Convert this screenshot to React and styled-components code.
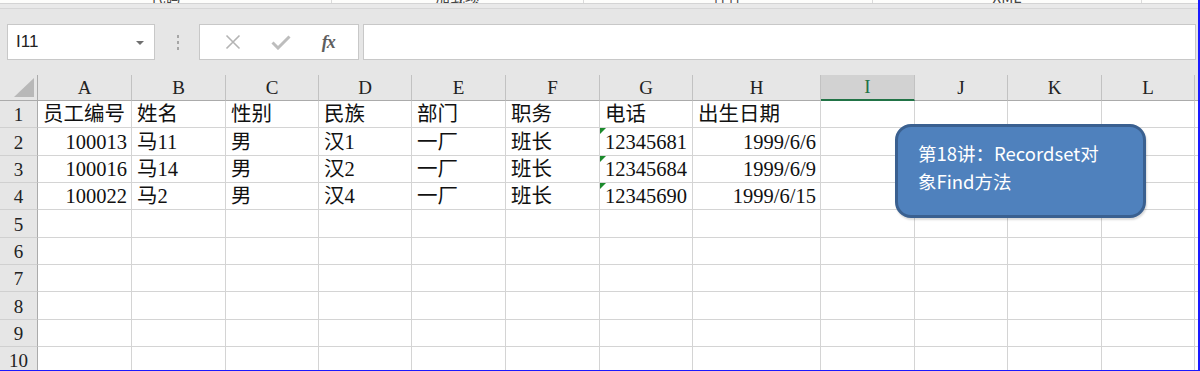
import React from 'react';
import styled, { createGlobalStyle } from 'styled-components';

const GlobalStyle = createGlobalStyle`
  html, body {
    margin: 0;
    padding: 0;
    background: #ffffff;
  }
  * {
    box-sizing: border-box;
  }
`;

const colWidths = [94, 94, 93, 93, 94, 94, 93, 128, 94, 93, 94, 93];
const colNames = ['A', 'B', 'C', 'D', 'E', 'F', 'G', 'H', 'I', 'J', 'K', 'L'];
const rowHeights = [27, 28, 27, 27, 28, 27, 27, 28, 27, 27];
const selectedCol = 8;

const rows = [
  ['员工编号', '姓名', '性别', '民族', '部门', '职务', '电话', '出生日期'],
  [{ v: '100013', right: true }, '马11', '男', '汉1', '一厂', '班长', { v: '12345681', flag: true }, { v: '1999/6/6', right: true }],
  [{ v: '100016', right: true }, '马14', '男', '汉2', '一厂', '班长', { v: '12345684', flag: true }, { v: '1999/6/9', right: true }],
  [{ v: '100022', right: true }, '马2', '男', '汉4', '一厂', '班长', { v: '12345690', flag: true }, { v: '1999/6/15', right: true }],
];

const ribbonGroups = [
  { label: '代码', width: 332 },
  { label: '加载项', width: 252 },
  { label: '控件', width: 289 },
  { label: 'XML', width: 269 },
  { label: '', width: 58 },
];

const Window = styled.div`
  position: relative;
  width: 1200px;
  height: 371px;
  overflow: hidden;
  background: #e6e6e6;
  border-right: 2px solid #1a1aff;
  border-bottom: 1px solid #1a1aff;
  font-family: 'Liberation Serif', 'Noto Sans CJK SC', serif;
`;

const Ribbon = styled.div`
  display: flex;
  height: 4px;
  background: #fdfdfb;
  border-bottom: 1px solid #d4d4d4;
  overflow: hidden;
`;

const RibbonGroup = styled.div`
  display: flex;
  align-items: flex-end;
  justify-content: center;
  flex: 0 0 ${p => p.$w}px;
  height: 3px;
  border-right: ${p => (p.$last ? 'none' : '1px solid #dadada')};
`;

const RibbonLabel = styled.span`
  font-family: 'Noto Sans CJK SC', 'Liberation Sans', sans-serif;
  font-size: 15px;
  line-height: 15px;
  color: #444;
  margin-bottom: -1px;
  white-space: nowrap;
`;

const Band = styled.div`
  height: 5px;
  background: #e9e9e9;
  border-bottom: 1px solid #d6d6d6;
`;

const FormulaArea = styled.div`
  display: flex;
  align-items: stretch;
  height: 66px;
  padding: 15px 2px 15px 7px;
`;

const Box = styled.div`
  display: flex;
  align-items: center;
  height: 36px;
  background: #ffffff;
  border: 1px solid #c8c8c8;
`;

const NameBox = styled(Box)`
  width: 148px;
  padding: 0 10px 0 8px;
  justify-content: space-between;
  font-family: 'Liberation Sans', 'Noto Sans', sans-serif;
  font-size: 17px;
  color: #222;
`;

const DropArrow = styled.span`
  width: 0;
  height: 0;
  border-left: 4px solid transparent;
  border-right: 4px solid transparent;
  border-top: 4px solid #6f6f6f;
  margin-top: 1px;
`;

const Grip = styled.div`
  flex: 0 0 44px;
  display: flex;
  flex-direction: column;
  align-items: center;
  justify-content: center;
  gap: 3px;
  padding-left: 1px;
`;

const GripDot = styled.span`
  width: 2px;
  height: 3px;
  background: #a6a6a6;
`;

const FnBox = styled(Box)`
  width: 160px;
  justify-content: space-around;
  padding: 0 8px 0 10px;
`;

const FxLabel = styled.span`
  font-family: 'Liberation Serif', serif;
  font-style: italic;
  font-weight: bold;
  font-size: 18px;
  color: #5e5e5e;
  letter-spacing: -1px;
`;

const FormulaInput = styled(Box)`
  flex: 1;
  margin-left: 4px;
`;

const Sheet = styled.div`
  display: grid;
  grid-template-columns: 38px ${colWidths.map(w => `${w}px`).join(' ')} 1fr;
  grid-template-rows: 26px ${rowHeights.map(h => `${h}px`).join(' ')};
  background: #ffffff;
`;

const Corner = styled.div`
  display: flex;
  align-items: flex-end;
  justify-content: flex-end;
  padding: 0 3px 3px 0;
  background: #e6e6e6;
  border-right: 1px solid #ababab;
  border-bottom: 1px solid #ababab;
`;

const ColHead = styled.div`
  display: flex;
  align-items: flex-end;
  justify-content: center;
  padding-bottom: 2px;
  font-size: 19px;
  line-height: 20px;
  color: ${p => (p.$sel ? '#217346' : '#222')};
  background: ${p => (p.$sel ? '#d2d2d2' : '#e6e6e6')};
  border-right: 1px solid #c2c2c2;
  border-bottom: ${p => (p.$sel ? '2px solid #217346' : '1px solid #ababab')};
`;

const RowHead = styled.div`
  display: flex;
  align-items: flex-end;
  justify-content: center;
  padding-bottom: 2px;
  font-size: 19px;
  line-height: 20px;
  color: #222;
  background: #e6e6e6;
  border-right: 1px solid #ababab;
  border-bottom: 1px solid #d0d0d0;
`;

const Cell = styled.div`
  position: relative;
  display: flex;
  align-items: flex-end;
  justify-content: ${p => (p.$right ? 'flex-end' : 'flex-start')};
  padding: 0 ${p => (p.$right ? '4px' : '2px')} 2px ${p => (p.$right ? '2px' : '5px')};
  font-size: 20.5px;
  line-height: 21px;
  color: #111;
  white-space: nowrap;
  overflow: visible;
  border-right: 1px solid #d4d4d4;
  border-bottom: 1px solid #d4d4d4;

  &::before {
    content: '';
    display: ${p => (p.$flag ? 'block' : 'none')};
    position: absolute;
    top: 0;
    left: 0;
    width: 0;
    height: 0;
    border-top: 6px solid #1b8a2c;
    border-right: 6px solid transparent;
  }
`;

const Callout = styled.div`
  position: absolute;
  left: 895px;
  top: 124px;
  width: 251px;
  height: 94px;
  padding: 12px 14px 0 20px;
  background: #4f81bd;
  border: 3px solid #3a6090;
  border-radius: 16px;
  box-shadow: 1px 2px 2px rgba(0, 0, 0, 0.15);
  color: #ffffff;
  font-family: 'Noto Sans CJK SC', 'Noto Sans', sans-serif;
  font-size: 18.5px;
  line-height: 28px;
`;

const CrossIcon = () => (
  <svg width="16" height="16" viewBox="0 0 16 16">
    <path d="M1.5 1.5 L14.5 14.5 M14.5 1.5 L1.5 14.5" stroke="#b4b4b4" strokeWidth="1.6" fill="none" />
  </svg>
);

const CheckIcon = () => (
  <svg width="20" height="15" viewBox="0 0 20 15">
    <path d="M1.5 7.5 L7 13 L18.5 1.5" stroke="#bdbdbd" strokeWidth="3" fill="none" />
  </svg>
);

const CornerMark = () => (
  <svg width="20" height="19" viewBox="0 0 20 19">
    <polygon points="20,0 20,19 0,19" fill="#b8b8b8" />
  </svg>
);

export default function App() {
  return (
    <>
      <GlobalStyle />
      <Window>
        <Ribbon>
          {ribbonGroups.map((g, i) => (
            <RibbonGroup key={i} $w={g.width} $last={i === ribbonGroups.length - 1}>
              <RibbonLabel>{g.label}</RibbonLabel>
            </RibbonGroup>
          ))}
        </Ribbon>
        <Band />
        <FormulaArea>
          <NameBox>
            <span>I11</span>
            <DropArrow />
          </NameBox>
          <Grip>
            <GripDot />
            <GripDot />
            <GripDot />
          </Grip>
          <FnBox>
            <CrossIcon />
            <CheckIcon />
            <FxLabel>fx</FxLabel>
          </FnBox>
          <FormulaInput />
        </FormulaArea>
        <Sheet>
          <Corner>
            <CornerMark />
          </Corner>
          {colNames.map((c, i) => (
            <ColHead key={c} $sel={i === selectedCol}>{c}</ColHead>
          ))}
          <ColHead />
          {rowHeights.map((_, r) => {
            const data = rows[r] || [];
            return (
              <React.Fragment key={r}>
                <RowHead>{r + 1}</RowHead>
                {colNames.map((c, ci) => {
                  const raw = data[ci];
                  const cell = typeof raw === 'string' ? { v: raw } : raw || { v: '' };
                  return (
                    <Cell key={c} $right={cell.right} $flag={cell.flag}>
                      {cell.v}
                    </Cell>
                  );
                })}
                <Cell />
              </React.Fragment>
            );
          })}
        </Sheet>
        <Callout>
          第18讲：Recordset对
          <br />
          象Find方法
        </Callout>
      </Window>
    </>
  );
}
